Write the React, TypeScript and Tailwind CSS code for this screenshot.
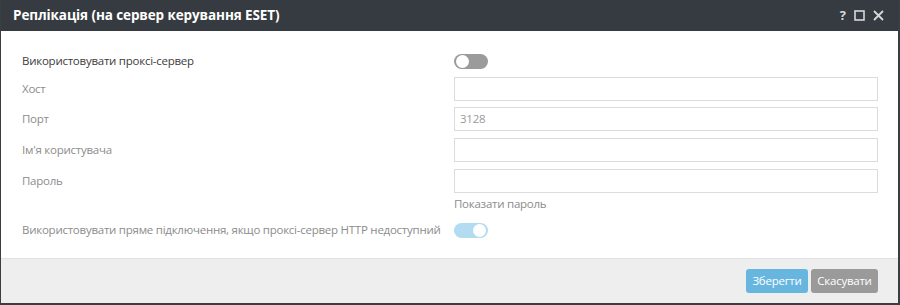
import React from "react";

function Toggle({ on }: { on: boolean }) {
  return (
    <div
      className={
        "relative w-[34px] h-[15px] rounded-full " +
        (on ? "bg-[#b3dbf2]" : "bg-[#9b9b9b]")
      }
    >
      <div
        className={
          "absolute top-[1px] w-[13px] h-[13px] rounded-full bg-white " +
          (on ? "right-[2px]" : "left-[2px]")
        }
      />
    </div>
  );
}

function Row({
  label,
  dark,
  children,
  className,
}: {
  label: string;
  dark?: boolean;
  children: React.ReactNode;
  className?: string;
}) {
  return (
    <div className={"flex items-center h-[24px] " + (className ?? "")}>
      <div
        className={
          "w-[432px] whitespace-nowrap text-[11.5px] tracking-[-0.25px] " +
          (dark ? "text-[#3c3c3c]" : "text-[#8c8c8c]")
        }
      >
        {label}
      </div>
      <div className="flex-1 flex items-center h-full">{children}</div>
    </div>
  );
}

function Input({ value }: { value?: string }) {
  return (
    <div className="w-full h-[24px] border border-[#dcdcdc] bg-white flex items-center px-[5px] text-[11.5px] tracking-[-0.25px] text-[#9a9a9a]">
      {value}
    </div>
  );
}

export default function App() {
  return (
    <div
      className="w-[900px] h-[305px] bg-[#3a3e43] pl-px pr-[2px] overflow-hidden"
      style={{ fontFamily: '"Open Sans", "Noto Sans", sans-serif' }}
    >
      <div className="h-[303px] flex flex-col bg-white">
        <div className="h-[31px] bg-[#363b41] flex items-center pl-[12px] pr-[14px] shrink-0">
          <div className="text-white text-[13.5px] font-bold flex-1 tracking-[-0.1px]">
            Реплікація (на сервер керування ESET)
          </div>
          <div className="flex items-center gap-[8px] text-[#d8d8d8]">
            <span className="text-[13px] font-bold leading-none">?</span>
            <svg width="11" height="11" viewBox="0 0 11 11">
              <rect x="1" y="1" width="9" height="9" fill="none" stroke="#d8d8d8" strokeWidth="1.6" />
            </svg>
            <svg width="11" height="11" viewBox="0 0 11 11">
              <path d="M1 1 L10 10 M10 1 L1 10" stroke="#d8d8d8" strokeWidth="1.8" />
            </svg>
          </div>
        </div>
        <div className="flex-1 pt-[18px] pl-[21px] pr-[20px] flex flex-col">
          <Row label="Використовувати проксі-сервер" dark>
            <Toggle on={false} />
          </Row>
          <Row label="Хост" className="mt-[4px]">
            <Input />
          </Row>
          <Row label="Порт" className="mt-[6px]">
            <Input value="3128" />
          </Row>
          <Row label="Ім'я користувача" className="mt-[7px]">
            <Input />
          </Row>
          <Row label="Пароль" className="mt-[7px]">
            <Input />
          </Row>
          <div className="flex h-[18px] mt-[2px] items-center">
            <div className="w-[432px]" />
            <div className="text-[11.5px] tracking-[-0.25px] text-[#8c8c8c]">Показати пароль</div>
          </div>
          <Row label="Використовувати пряме підключення, якщо проксі-сервер HTTP недоступний" className="mt-[5px]">
            <Toggle on={true} />
          </Row>
        </div>
        <div className="h-[45px] bg-[#eeeeee] border-t border-[#e2e2e2] flex items-center justify-end pr-[20px] gap-[3px] shrink-0">
          <button className="h-[24px] w-[62px] rounded-[3px] bg-[#67b6df] text-white text-[11.5px] tracking-[-0.25px]">
            Зберегти
          </button>
          <button className="h-[24px] w-[67px] rounded-[3px] bg-[#9a9a9a] text-white text-[11.5px] tracking-[-0.25px]">
            Скасувати
          </button>
        </div>
      </div>
    </div>
  );
}
